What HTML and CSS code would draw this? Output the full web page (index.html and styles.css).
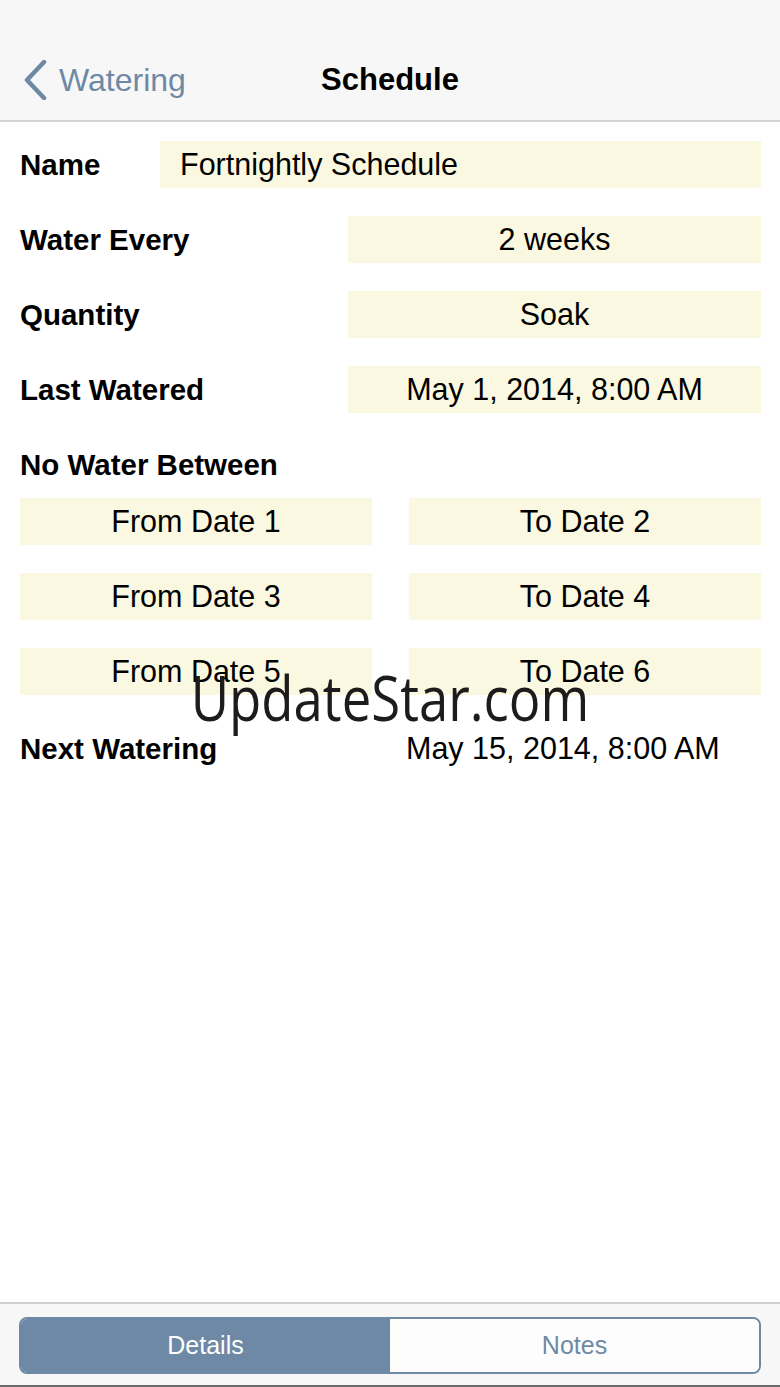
FILE: index.html
```html
<!DOCTYPE html>
<html lang="en">
<head>
    <meta charset="UTF-8">
    <meta name="viewport" content="width=device-width, initial-scale=1.0">
    <title>Schedule</title>
    <link rel="stylesheet" href="styles.css">
</head>
<body>
    <header class="nav">
        <a class="back" href="#">
            <svg class="chevron" width="26" height="40" viewBox="0 0 26 40">
                <polyline points="22,2 5,20 22,38" fill="none" stroke="#6e89a5" stroke-width="4.5" stroke-linecap="round" stroke-linejoin="round"/>
            </svg>
            <span>Watering</span>
        </a>
        <h1 class="title">Schedule</h1>
    </header>
    <main class="form">
        <div class="row">
            <div class="label name-label">Name</div>
            <div class="field field-left">Fortnightly Schedule</div>
        </div>
        <div class="row">
            <div class="label">Water Every</div>
            <div class="field">2 weeks</div>
        </div>
        <div class="row">
            <div class="label">Quantity</div>
            <div class="field">Soak</div>
        </div>
        <div class="row">
            <div class="label">Last Watered</div>
            <div class="field">May 1, 2014, 8:00 AM</div>
        </div>
        <div class="section-label">No Water Between</div>
        <div class="dates">
            <div class="field">From Date 1</div>
            <div class="field">To Date 2</div>
            <div class="field">From Date 3</div>
            <div class="field">To Date 4</div>
            <div class="field">From Date 5</div>
            <div class="field">To Date 6</div>
        </div>
        <div class="row next-row">
            <div class="label next-label">Next Watering</div>
            <div class="value">May 15, 2014, 8:00 AM</div>
        </div>
        <div class="watermark">UpdateStar.com</div>
    </main>
    <footer class="tabbar">
        <div class="segmented">
            <button class="segment active">Details</button>
            <button class="segment">Notes</button>
        </div>
    </footer>
</body>
</html>
```

FILE: styles.css
```css
body {
    font-family: "Liberation Sans", Arial, sans-serif;
    margin: 0;
    padding: 0;
    background-color: #ffffff;
    color: #000000;
    height: 1387px;
    display: flex;
    flex-direction: column;
}
.nav {
    height: 80px;
    padding-top: 40px;
    background-color: #f7f7f7;
    border-bottom: 2px solid #d4d4d4;
    display: flex;
    align-items: center;
    justify-content: center;
    position: relative;
}
.back {
    position: absolute;
    left: 22px;
    top: 60px;
    display: flex;
    align-items: center;
    gap: 11px;
    color: #6e89a5;
    text-decoration: none;
    font-size: 32px;
}
.chevron {
    display: block;
}
.title {
    margin: 0;
    font-size: 31px;
    font-weight: bold;
}
.form {
    flex: 1;
    padding: 19px 19px 0 20px;
    position: relative;
}
.row {
    display: flex;
    align-items: center;
    height: 47px;
    margin-bottom: 28px;
}
.label {
    width: 328px;
    flex-shrink: 0;
    font-size: 29.5px;
    font-weight: bold;
}
.name-label {
    width: 140px;
}
.field {
    flex: 1;
    height: 47px;
    background-color: #fbf8e1;
    display: flex;
    align-items: center;
    justify-content: center;
    font-size: 30.5px;
}
.field-left {
    justify-content: flex-start;
    padding-left: 20px;
}
.section-label {
    height: 48px;
    display: flex;
    align-items: center;
    font-size: 29.5px;
    font-weight: bold;
    margin-bottom: 9px;
}
.dates {
    display: grid;
    grid-template-columns: 1fr 1fr;
    grid-auto-rows: 47px;
    column-gap: 37px;
    row-gap: 28px;
}
.next-row {
    margin-top: 30px;
}
.next-label {
    width: 386px;
}
.value {
    font-size: 30.5px;
}
.watermark {
    position: absolute;
    left: 0;
    right: 0;
    top: 544px;
    text-align: center;
    font-family: "Open Sans", sans-serif;
    font-size: 62px;
    line-height: 62px;
    color: #1c1c1c;
    transform: scaleX(0.85);
    pointer-events: none;
}
.tabbar {
    background-color: #f7f7f7;
    border-top: 2px solid #cfcfcf;
    border-bottom: 2px solid #6a6a6a;
    padding: 13px 19px 0 19px;
    box-sizing: border-box;
    height: 85px;
}
.segmented {
    display: flex;
    height: 57px;
    border: 2px solid #6e89a5;
    border-radius: 8px;
    overflow: hidden;
    box-sizing: border-box;
}
.segment {
    flex: 1;
    border: none;
    margin: 0;
    padding: 0;
    font-family: "Liberation Sans", Arial, sans-serif;
    font-size: 25px;
    background-color: #fdfdfd;
    color: #6e89a5;
}
.segment.active {
    background-color: #6e89a5;
    color: #ffffff;
}
```
